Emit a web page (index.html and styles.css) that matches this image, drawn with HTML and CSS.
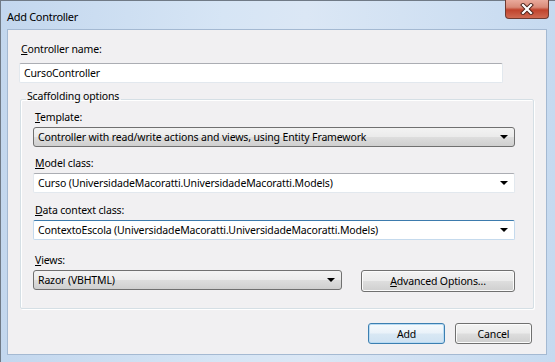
FILE: index.html
```html
<!DOCTYPE html>
<html lang="en">
<head>
    <meta charset="UTF-8">
    <title>Add Controller</title>
    <link rel="stylesheet" href="styles.css">
</head>
<body>
    <div class="window">
        <div class="titlebar">
            <div class="title">Add Controller</div>
            <div class="btn-close">
                <svg width="16" height="12" viewBox="0 0 16 12">
                    <path d="M4 2 L12 10 M12 2 L4 10" stroke="#4a2018" stroke-width="4" stroke-linecap="square"/>
                    <path d="M4 2 L12 10 M12 2 L4 10" stroke="#ffffff" stroke-width="2.2" stroke-linecap="square"/>
                </svg>
            </div>
        </div>
        <div class="client">
            <div class="lbl lbl-top"><u>C</u>ontroller name:</div>
            <div class="textbox name-box">CursoController</div>

            <fieldset class="group">
                <legend>Scaffolding options</legend>

                <div class="lbl"><u>T</u>emplate:</div>
                <div class="combo combo-gray">
                    <span>Controller with read/write actions and views, using Entity Framework</span>
                    <i class="arrow"></i>
                </div>

                <div class="lbl gap-model"><u>M</u>odel class:</div>
                <div class="combo combo-white">
                    <span>Curso (UniversidadeMacoratti.UniversidadeMacoratti.Models)</span>
                    <i class="arrow"></i>
                </div>

                <div class="lbl gap-context"><u>D</u>ata context class:</div>
                <div class="combo combo-white combo-focus">
                    <span>ContextoEscola (UniversidadeMacoratti.UniversidadeMacoratti.Models)</span>
                    <i class="arrow"></i>
                </div>

                <div class="lbl gap-views"><u>V</u>iews:</div>
                <div class="views-row">
                    <div class="combo combo-gray views-combo">
                        <span>Razor (VBHTML)</span>
                        <i class="arrow"></i>
                    </div>
                    <button class="btn btn-adv"><u>A</u>dvanced Options...</button>
                </div>
            </fieldset>

            <div class="actions">
                <button class="btn btn-default">Add</button>
                <button class="btn">Cancel</button>
            </div>
        </div>
    </div>
</body>
</html>
```

FILE: styles.css
```css
html, body {
    margin: 0;
    padding: 0;
}
body {
    font-family: "Noto Sans", "Open Sans", sans-serif;
    font-size: 10.5px;
    letter-spacing: -0.15px;
    color: #000;
    background: #c8dbf0;
}
.window {
    width: 555px;
    height: 362px;
    box-sizing: border-box;
    border-top: 1px solid #707a86;
    border-left: 1px solid #707a86;
    background: linear-gradient(90deg, #c3d7ee 0%, #d6e5f5 40%, #dbe7f5 55%, #c6daf0 100%);
    display: flex;
    flex-direction: column;
}
.titlebar {
    height: 28px;
    display: flex;
    justify-content: space-between;
    align-items: flex-start;
}
.title {
    padding: 8px 0 0 6px;
    font-size: 11px;
    line-height: 15px;
    letter-spacing: -0.3px;
}
.btn-close {
    width: 42px;
    height: 18px;
    margin-right: 6px;
    margin-top: -1px;
    border: 1px solid #6e3a30;
    border-top: none;
    border-radius: 0 0 4px 4px;
    background: linear-gradient(#e9aa9c 0%, #d98a78 40%, #c0432d 55%, #cf6a52 100%);
    display: flex;
    align-items: center;
    justify-content: center;
}
.client {
    width: 540px;
    height: 326px;
    box-sizing: border-box;
    margin-left: 6px;
    border: 1px solid #a4b9d2;
    background: #f1f0f2;
    padding: 12px 13px 0 11px;
}
.lbl {
    line-height: 15px;
    padding-left: 2px;
    white-space: nowrap;
}
.lbl u, .btn u {
    text-decoration-thickness: 1px;
    text-underline-offset: 1px;
}
.textbox {
    height: 20px;
    box-sizing: border-box;
    background: #fff;
    border: 1px solid #e2e8ee;
    border-top-color: #abadb3;
    border-radius: 2px;
    padding: 0 4px;
    line-height: 18px;
}
.name-box {
    margin-top: 6px;
    margin-right: 30px;
}
.group {
    margin: 6px 0 0 1px;
    padding: 0 18px 16px 12px;
    border: 1px solid #d5dfe5;
    border-radius: 2px;
    box-shadow: inset 1px 1px 0 #fff, 1px 1px 0 #fff;
}
.group legend {
    margin-left: -7px;
    padding: 0 2px 6px 1px;
    line-height: 15px;
}
.gap-model {
    margin-top: 9px;
}
.gap-context {
    margin-top: 10px;
}
.gap-views {
    margin-top: 13px;
}
.combo {
    height: 20px;
    box-sizing: border-box;
    margin-top: 2px;
    display: flex;
    align-items: center;
    justify-content: space-between;
    padding: 0 4px;
    line-height: 18px;
    white-space: nowrap;
}
.combo-gray {
    border: 1px solid #707070;
    border-radius: 3px;
    background: linear-gradient(#f3f3f3 0%, #ebebeb 48%, #dddddd 52%, #cfcfcf 100%);
}
.combo-white {
    border: 1px solid #e2e8ee;
    border-top-color: #abadb3;
    border-radius: 2px;
    background: #fff;
}
.combo-focus {
    border-color: #c5daed;
    border-top-color: #3d7bad;
}
.arrow {
    width: 0;
    height: 0;
    border-left: 4px solid transparent;
    border-right: 4px solid transparent;
    border-top: 4px solid #000;
    margin-right: 2px;
}
.views-row {
    display: flex;
    align-items: flex-start;
    gap: 19px;
    margin-top: 2px;
}
.views-combo {
    width: 309px;
    margin-top: 0;
}
.btn {
    font-family: inherit;
    font-size: 10.5px;
    letter-spacing: -0.15px;
    height: 21px;
    box-sizing: border-box;
    padding: 0;
    border: 1px solid #707070;
    border-radius: 3px;
    background: linear-gradient(#f3f3f3 0%, #ebebeb 48%, #dddddd 52%, #cfcfcf 100%);
    color: #000;
    box-shadow: inset 0 0 0 1px #fbfbfb;
}
.btn-adv {
    width: 154px;
    height: 22px;
}
.actions {
    display: flex;
    justify-content: flex-end;
    gap: 10px;
    margin-top: 14px;
    padding-right: 1px;
}
.actions .btn {
    width: 77px;
}
.btn-default {
    border-color: #3c7fb1;
    background: linear-gradient(#f6fafd 0%, #eaf2f9 48%, #d9e8f4 52%, #cfe2f2 100%);
    box-shadow: inset 0 0 0 1px #b9dbf3;
}
```
